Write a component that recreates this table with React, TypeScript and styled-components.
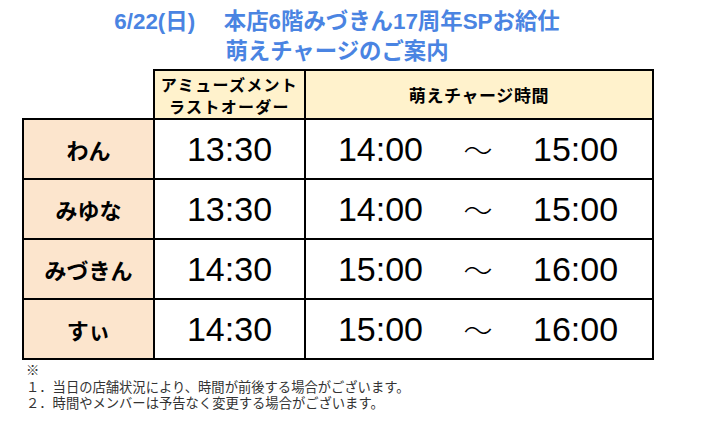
import styled, { createGlobalStyle } from "styled-components";

const GlobalStyle = createGlobalStyle`
  html, body {
    margin: 0;
    padding: 0;
    background: #ffffff;
  }
  body {
    font-family: "Liberation Sans", "Noto Sans CJK JP", sans-serif;
    color: #000;
  }
`;

const Page = styled.div`
  width: 714px;
  height: 423px;
  padding: 7px 0 0 22px;
  box-sizing: border-box;
  overflow: hidden;
`;

const Title = styled.h1`
  width: 630px;
  margin: 0;
  text-align: center;
  font-family: "Liberation Sans", "Noto Sans CJK JP", sans-serif;
  font-weight: 700;
  font-size: 22.4px;
  line-height: 30px;
  color: #4a84e2;
  white-space: pre;
`;

const Table = styled.table`
  margin-top: 2px;
  border-collapse: collapse;
  table-layout: fixed;
  width: 630px;
`;

const Corner = styled.th`
  border: none;
  padding: 0;
`;

const HeadCell = styled.th<{ $small?: boolean }>`
  border: 2px solid #000;
  background: #fff2cc;
  height: 47px;
  padding: 0;
  font-family: "Noto Sans CJK JP", sans-serif;
  font-weight: 700;
  font-size: ${({ $small }) => ($small ? "16px" : "17px")};
  letter-spacing: ${({ $small }) => ($small ? "1.3px" : "0.6px")};
  line-height: 22px;
  text-align: center;
  vertical-align: middle;
`;

const NameCell = styled.td`
  border: 2px solid #000;
  background: #fce5cd;
  height: 58px;
  padding: 0;
  text-align: center;
  vertical-align: middle;
  font-family: "Noto Sans CJK JP", sans-serif;
  font-weight: 700;
  font-size: 22px;
`;

const TimeCell = styled.td`
  border: 2px solid #000;
  background: #fff;
  padding: 0;
  text-align: center;
  vertical-align: middle;
  font-family: "Liberation Sans", Arial, sans-serif;
  font-size: 34px;
  line-height: 40px;
`;

const Range = styled.div`
  display: flex;
  justify-content: center;
  align-items: center;
  gap: 39px;
  padding-right: 2px;
`;

const Tilde = styled.span`
  display: inline-block;
  width: 32px;
  font-family: "Noto Sans CJK JP", sans-serif;
  font-weight: 300;
  font-size: 29px;
`;

const Notes = styled.div`
  margin-top: 2px;
  padding-left: 4px;
  font-family: "Noto Sans CJK JP", sans-serif;
  font-size: 13.3px;
  line-height: 16.5px;
  color: #333;
`;

const NoteLine = styled.div`
  white-space: nowrap;
`;

const rows = [
  { name: "わん", last: "13:30", from: "14:00", to: "15:00" },
  { name: "みゆな", last: "13:30", from: "14:00", to: "15:00" },
  { name: "みづきん", last: "14:30", from: "15:00", to: "16:00" },
  { name: "すぃ", last: "14:30", from: "15:00", to: "16:00" },
];

export default function App() {
  return (
    <Page>
      <GlobalStyle />
      <Title>{"6/22(日)　 本店6階みづきん17周年SPお給仕"}</Title>
      <Title>萌えチャージのご案内</Title>
      <Table>
        <colgroup>
          <col style={{ width: 131 }} />
          <col style={{ width: 151 }} />
          <col style={{ width: 348 }} />
        </colgroup>
        <thead>
          <tr>
            <Corner />
            <HeadCell $small>
              アミューズメント
              <br />
              ラストオーダー
            </HeadCell>
            <HeadCell>萌えチャージ時間</HeadCell>
          </tr>
        </thead>
        <tbody>
          {rows.map((r) => (
            <tr key={r.name}>
              <NameCell>{r.name}</NameCell>
              <TimeCell>{r.last}</TimeCell>
              <TimeCell>
                <Range>
                  <span>{r.from}</span>
                  <Tilde>～</Tilde>
                  <span>{r.to}</span>
                </Range>
              </TimeCell>
            </tr>
          ))}
        </tbody>
      </Table>
      <Notes>
        <NoteLine>※</NoteLine>
        <NoteLine>１．当日の店舗状況により、時間が前後する場合がございます。</NoteLine>
        <NoteLine>２．時間やメンバーは予告なく変更する場合がございます。</NoteLine>
      </Notes>
    </Page>
  );
}
